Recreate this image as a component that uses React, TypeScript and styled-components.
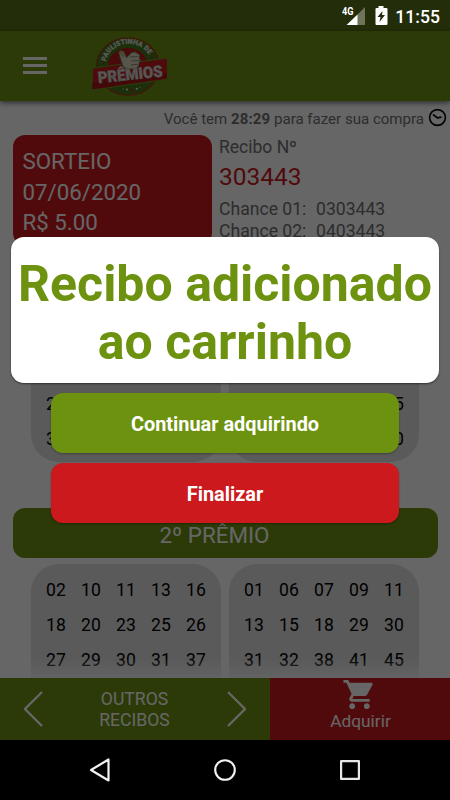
import React from "react";
import styled, { createGlobalStyle } from "styled-components";

const GREEN = "#6c920f";
const RED = "#cb191e";

const GlobalStyle = createGlobalStyle`
  * { box-sizing: border-box; }
  body { margin: 0; background: #000; font-family: Roboto, "Liberation Sans", sans-serif; }
  button { font: inherit; border: 0; padding: 0; background: none; color: inherit; }
`;

const Phone = styled.div`
  position: relative;
  width: 450px;
  height: 800px;
  overflow: hidden;
  display: flex;
  flex-direction: column;
`;

const StatusBar = styled.div`
  height: 31px;
  flex: none;
  background: #577118;
`;

const Header = styled.header`
  height: 70px;
  flex: none;
  display: flex;
  align-items: center;
  padding-left: 23px;
  background: ${GREEN};
  box-shadow: 0 2px 5px rgba(0, 0, 0, 0.55);
  z-index: 1;
`;

const MenuButton = styled.button`
  width: 24px;
  height: 17px;
  margin-top: -1px;
  display: flex;
  flex-direction: column;
  justify-content: space-between;
`;

const MenuLine = styled.span`
  height: 3px;
  background: #fff;
`;

const Logo = styled.svg`
  display: block;
  margin-left: 38px;
  width: 90px;
  height: 68px;
`;

const Content = styled.main`
  flex: 1;
  min-height: 0;
  overflow: hidden;
  background: #fff;
`;

const Timer = styled.div`
  height: 34px;
  display: flex;
  align-items: center;
  justify-content: flex-end;
  gap: 4px;
  padding-right: 3px;
  font-size: 15.05px;
  color: #707070;
  white-space: nowrap;
  svg { display: block; margin-top: -1px; }
  span { padding-top: 2px; }
  b { letter-spacing: 0.1px; }
`;

const Summary = styled.section`
  display: flex;
  gap: 7px;
  height: 117px;
  padding-left: 12.5px;
`;

const DrawCard = styled.div`
  width: 199.5px;
  height: 110px;
  padding: 11px 10px;
  border-radius: 12px;
  background: ${RED};
  color: #fff;
  font-size: 22.3px;
  line-height: 30.7px;
`;

const Receipt = styled.div`
  color: #707070;
  white-space: nowrap;
`;

const ReceiptLabel = styled.div`
  font-size: 17.5px;
  line-height: 24px;
`;

const ReceiptNumber = styled.div`
  font-size: 24.5px;
  line-height: 36px;
  color: ${RED};
`;

const Chances = styled.div`
  padding-top: 3px;
`;

const Chance = styled.div`
  display: flex;
  font-size: 17.6px;
  line-height: 22.4px;
  span { width: 97px; }
`;

const Prize = styled.section`
  height: 256px;
`;

const PrizeTitle = styled.h2`
  margin: 0 12.5px 6px;
  height: 50px;
  padding-right: 21px;
  border-radius: 12px;
  background: ${GREEN};
  color: #fff;
  font-weight: 400;
  font-size: 22.4px;
  line-height: 54px;
  text-align: center;
`;

const Cards = styled.div`
  display: flex;
  gap: 8px;
  padding-left: 31px;
`;

const NumberCard = styled.div<{ $end?: boolean }>`
  width: 190px;
  height: 154px;
  padding: 8px 7.5px 6px;
  border-radius: 28px;
  background: #e0e0e0;
  display: grid;
  grid-template-columns: repeat(5, 35px);
  grid-auto-rows: 35px;
  align-content: ${(p) => (p.$end ? "end" : "start")};
  place-items: center;
  font-size: 17.6px;
  color: #000;
`;

const Fade = styled.div`
  position: absolute;
  left: 0;
  right: 0;
  top: 658px;
  height: 20px;
  background: linear-gradient(rgba(255, 255, 255, 0), rgba(255, 255, 255, 0.72));
`;

const Actions = styled.footer`
  flex: none;
  height: 62px;
  display: flex;
  color: #fff;
`;

const OtherReceipts = styled.div`
  width: 270px;
  display: flex;
  align-items: center;
  justify-content: space-between;
  padding: 0 24.5px 0 23.5px;
  background: ${GREEN};
  font-size: 17.6px;
  line-height: 20.7px;
  text-align: center;
  svg { display: block; }
  span { padding-top: 2px; }
`;

const Acquire = styled.button`
  flex: 1;
  display: flex;
  flex-direction: column;
  align-items: center;
  justify-content: flex-start;
  background: ${RED};
  color: #fff;
  font-size: 17.3px;
  line-height: 20px;
  svg { display: block; margin: -1px 0 -1px -1px; }
`;

const Label = styled.span`
  padding-left: 1px;
`;

const NavBar = styled.nav`
  height: 60px;
  flex: none;
  display: flex;
  align-items: center;
  justify-content: center;
  gap: 101px;
  background: #000;
`;

const Overlay = styled.div`
  position: absolute;
  inset: 0 0 60px;
  z-index: 2;
  background: rgba(0, 0, 0, 0.6);
  display: flex;
  flex-direction: column;
  align-items: center;
`;

const SystemStatus = styled.div`
  height: 31px;
  align-self: stretch;
  display: flex;
  align-items: center;
  justify-content: flex-end;
  padding: 2px 10px 0 0;
  color: #fff;
  font-size: 17.6px;
  font-weight: 500;
  svg { display: block; margin: -1px -2px 0 0; }
`;

const Dialog = styled.div`
  width: 428px;
  height: 146px;
  flex: none;
  margin-top: 206px;
  margin-bottom: 10px;
  padding-top: 17.500px;
  border-radius: 13px;
  background: #fff;
  box-shadow: 0 1px 2px rgba(0, 0, 0, 0.5);
  color: ${GREEN};
  font-size: 50px;
  font-weight: 700;
  line-height: 58.6px;
  text-align: center;
  white-space: nowrap;
`;

const DialogButton = styled.button<{ $color: string }>`
  width: 348px;
  height: 60px;
  flex: none;
  margin: 0 0 10px;
  padding-top: 2px;
  border-radius: 12px;
  background: ${(p) => p.$color};
  box-shadow: 0 1px 2px rgba(0, 0, 0, 0.3);
  color: #fff;
  font-size: 19.9px;
  font-weight: 700;
`;

const prizes = [
  {
    title: "1º PRÊMIO",
    alignEnd: true,
    cards: [
      ["22", "24", "26", "28", "31", "35", "38", "41", "45", "48"],
      ["27", "29", "32", "33", "35", "36", "39", "42", "48", "50"],
    ],
  },
  {
    title: "2º PRÊMIO",
    alignEnd: false,
    cards: [
      ["02", "10", "11", "13", "16", "18", "20", "23", "25", "26", "27", "29", "30", "31", "37"],
      ["01", "06", "07", "09", "11", "13", "15", "18", "29", "30", "31", "32", "38", "41", "45"],
    ],
  },
];

const BrandLogo = () => (
  <Logo viewBox="0 0 90 68">
    <defs>
      <path id="arc" d="M20.5 33.500a23 21 0 0 1 45.500-5" />
    </defs>
    <ellipse cx="43" cy="34.500" rx="31.500" ry="28.600" fill="#42761b" stroke="#a5391c" strokeWidth="1.300" />
    <ellipse cx="43" cy="34" rx="20" ry="18" fill="#b9191d" />
    <text fill="#ddd" stroke="#ddd" strokeWidth=".2" fontSize="7" fontWeight="900">
      <textPath href="#arc" startOffset="4" textLength="55" lengthAdjust="spacingAndGlyphs">PAULISTINHA DE</textPath>
    </text>
    <path d="M9 36 80 26.200q2.400-.2 2.500 2.200v17q0 1.800-2 2.100L9 57.800q-2.400.2-2.100-2.200L7.400 38q0-1.800 1.600-2Z" fill="#c51920" stroke="#64941a" strokeWidth="1.200" />
    <path d="m7 51 75-10v5L7 57Z" fill="#8d1416" opacity=".55" />
    <path d="M38 34q-2.500-6-4-12-.8-3 2-3.300 3-.2 3.700 2.500l2 4.300 5-5q4-1.600 6 1 3.600 1.400 1.700 4.500 2 2.600-.3 4.700.6 4.400-4.200 5.800Q41 38.500 38 34Z" fill="#ddd8bd" stroke="#68764c" strokeWidth="1" />
    <path d="m45 25 8-.5M46 29l8-.5M46 33l6.800-.7" stroke="#777560" strokeWidth=".8" />
    <path d="M34 20q2-2 4-.3l2.200 5.100-2.800.5Z" fill="#bcb080" />
    <g transform="translate(13.400 51.200) rotate(-6)">
      <text fill="#dcdcdc" stroke="#b7bba9" strokeWidth=".5" fontSize="16" fontWeight="900" textLength="65" lengthAdjust="spacingAndGlyphs">PRÊMIOS</text>
    </g>
    <circle cx="42" cy="57.500" r="1" fill="#eee" />
    <circle cx="47" cy="58" r="1.500" fill="#c51920" />
    <circle cx="51.800" cy="56.800" r="1" fill="#eee" />
    <circle cx="38.500" cy="57" r=".6" fill="#ddd" />
    <circle cx="55" cy="55.500" r=".6" fill="#ddd" />
    <circle cx="18.500" cy="31.500" r="1" fill="#c51920" />
    <circle cx="67" cy="26" r="1" fill="#c51920" />
  </Logo>
);

const Chevron = ({ right = false }: { right?: boolean }) => (
  <svg width="19" height="36" viewBox="0 0 19 36" fill="none" stroke="#fff" strokeWidth="2.300">
    <path d={right ? "M1 1 18 18 1 35" : "M18 1 1 18 18 35"} />
  </svg>
);

export default function App() {
  return (
    <>
      <GlobalStyle />
      <Phone>
        <StatusBar />
        <Header>
          <MenuButton aria-label="Menu">
            <MenuLine />
            <MenuLine />
            <MenuLine />
          </MenuButton>
          <BrandLogo />
        </Header>
        <Content>
          <Timer>
            <span>Você tem <b>28:29</b> para fazer sua compra</span>
            <svg width="19" height="19" viewBox="0 0 19 19" fill="none" stroke="#000" strokeWidth="1.600">
              <circle cx="9.500" cy="9.500" r="7.900" />
              <path d="M5 6.500 9.500 9.800l4-.7" />
            </svg>
          </Timer>
          <Summary>
            <DrawCard>
              SORTEIO<br />07/06/2020<br />R$ 5.00
            </DrawCard>
            <Receipt>
              <ReceiptLabel>Recibo Nº</ReceiptLabel>
              <ReceiptNumber>303443</ReceiptNumber>
              <Chances>
                <Chance><span>Chance 01:</span>0303443</Chance>
                <Chance><span>Chance 02:</span>0403443</Chance>
              </Chances>
            </Receipt>
          </Summary>
          {prizes.map((prize) => (
            <Prize key={prize.title}>
              <PrizeTitle>{prize.title}</PrizeTitle>
              <Cards>
                {prize.cards.map((numbers, i) => (
                  <NumberCard key={i} $end={prize.alignEnd}>
                    {numbers.map((n, j) => <span key={j}>{n}</span>)}
                  </NumberCard>
                ))}
              </Cards>
            </Prize>
          ))}
        </Content>
        <Fade />
        <Actions>
          <OtherReceipts>
            <Chevron />
            <span>OUTROS<br />RECIBOS</span>
            <Chevron right />
          </OtherReceipts>
          <Acquire>
            <svg width="35" height="35" viewBox="0 0 24 24" fill="#fff">
              <path d="M7 18c-1.1 0-1.99.9-1.99 2S5.900 22 7 22s2-.9 2-2-.9-2-2-2zM1 2v2h2l3.600 7.590-1.350 2.450c-.16.280-.25.610-.25.960 0 1.100.9 2 2 2h12v-2H7.420c-.14 0-.25-.11-.25-.25l.03-.12.900-1.630h7.450c.75 0 1.410-.41 1.750-1.030l3.580-6.490c.08-.14.120-.31.120-.48 0-.55-.45-1-1-1H5.210l-.94-2H1zm16 16c-1.100 0-1.990.9-1.990 2s.89 2 1.990 2 2-.9 2-2-.9-2-2-2z" />
            </svg>
            <Label>Adquirir</Label>
          </Acquire>
        </Actions>
        <NavBar>
          <svg width="24" height="26" viewBox="0 0 24 26" fill="none" stroke="#f2f2f2" strokeWidth="2.200" strokeLinejoin="round">
            <path d="M20.500 2.500v21L3 13Z" />
          </svg>
          <svg width="24" height="24" viewBox="0 0 24 24" fill="none" stroke="#f2f2f2" strokeWidth="2.100">
            <circle cx="12" cy="12" r="9.800" />
          </svg>
          <svg width="24" height="24" viewBox="0 0 24 24" fill="none" stroke="#e8e8e8" strokeWidth="2.200" strokeLinejoin="round">
            <rect x="3.100" y="3.100" width="17.800" height="17.800" />
          </svg>
        </NavBar>
        <Overlay>
          <SystemStatus>
            <svg width="55" height="20" viewBox="0 0 55 20">
              <text x="0" y="9" fill="#fff" fontSize="10.500" fontWeight="700" textLength="11.500" lengthAdjust="spacingAndGlyphs">4G</text>
              <path d="M23 1v18h-8V9Z" fill="#6d7459" />
              <path d="M15.500 8.500V19H4.500Z" fill="#fff" />
              <path d="M36.500 0h5v2h3q1 0 1 1v15q0 1-1 1h-10q-1 0-1-1V3q0-1 1-1h2Z" fill="#fff" />
              <path d="m40.500 5-5 6h3l-1 5 5.500-7h-3Z" fill="#232d09" />
            </svg>
            11:55
          </SystemStatus>
          <Dialog>Recibo adicionado<br />ao carrinho</Dialog>
          <DialogButton $color={GREEN}>Continuar adquirindo</DialogButton>
          <DialogButton $color={RED}>Finalizar</DialogButton>
        </Overlay>
      </Phone>
    </>
  );
}
